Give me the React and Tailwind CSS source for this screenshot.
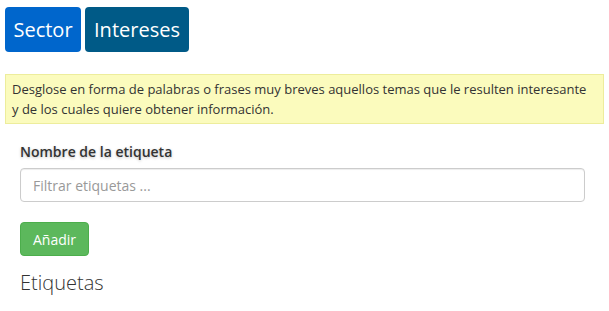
import React from 'react';

export default function App() {
  return (
    <div className="min-h-[311px] w-[609px] bg-white text-[#333]" style={{ fontFamily: '"Open Sans", "Noto Sans", sans-serif' }}>
      {/* ── Tabs ── */}
      <div className="flex gap-[4px] pl-[5px] pt-[7px]">
        <button className="h-[45px] w-[76px] rounded-[4px] bg-[#0066cc] text-[20px] text-white">Sector</button>
        <button className="h-[45px] w-[104px] rounded-[4px] bg-[#005a87] text-[20px] text-white">Intereses</button>
      </div>

      {/* ── Help notice ── */}
      <div className="mx-[5px] mt-[22px] h-[50px] border border-[#eded9c] bg-[#fbfbbd] pl-[6px] pr-[12px] pt-[4px] text-[13px] leading-[20px] text-[#333]">
        Desglose en forma de palabras o frases muy breves aquellos temas que le resulten interesante y de los cuales quiere obtener información.
      </div>

      {/* ── Form ── */}
      <div className="px-[20px] pt-[18px]">
        <label
          className="block text-[14px] font-semibold leading-[20px] text-[#333]"
          style={{ textShadow: '0 1px 3px rgba(0,0,0,0.25)' }}
        >
          Nombre de la etiqueta
        </label>
        <input
          type="text"
          placeholder="Filtrar etiquetas ..."
          className="mt-[6px] block h-[34px] w-[565px] rounded-[4px] border border-[#ccc] px-[12px] text-[14px] text-[#555] placeholder:text-[#999] shadow-[inset_0_1px_1px_rgba(0,0,0,0.075)]"
        />
        <button className="mt-[20px] h-[34px] w-[69px] rounded-[4px] border border-[#4cae4c] bg-[#5cb85c] text-[14px] text-white">
          Añadir
        </button>
        <h3 className="mt-[14px] text-[20px] font-light leading-[26px] text-[#333]">Etiquetas</h3>
      </div>
    </div>
  );
}
